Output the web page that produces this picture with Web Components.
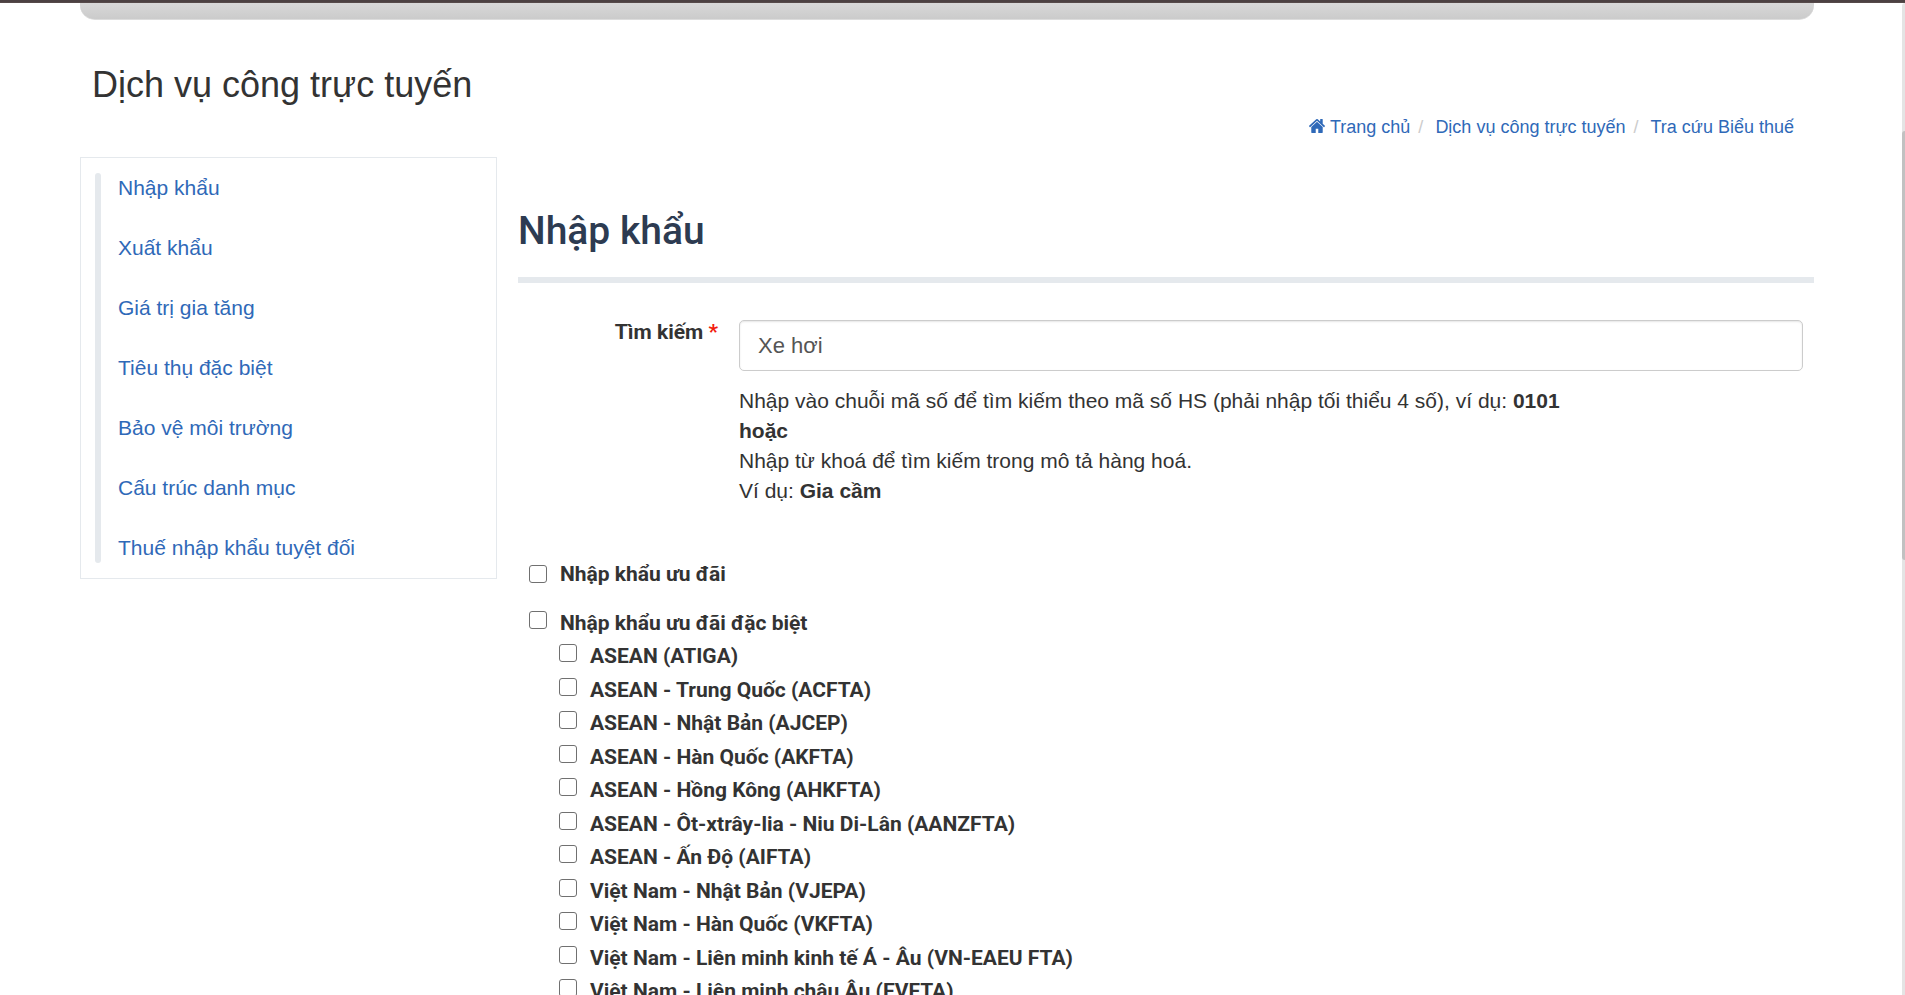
<!DOCTYPE html>
<html lang="vi">
<head>
<meta charset="utf-8">
<meta name="viewport" content="width=device-width, initial-scale=1">
<title>Tra cứu Biểu thuế</title>
<style>
  html, body { margin: 0; height: 100%; }
  body {
    overflow: hidden;
    background: #fff;
    color: #333;
    font: 21px/30px "Liberation Sans", Arial, sans-serif;
    --link: #2f69b8;
    --rule: #e5e9ed;
    --label-font: Roboto, sans-serif;
  }
</style>
</head>
<body>
<tariff-page>
  <page-header slot="header" heading="Dịch vụ công trực tuyến"></page-header>
  <side-menu slot="side">
    <menu-link href="#nhap-khau">Nhập khẩu</menu-link>
    <menu-link href="#xuat-khau">Xuất khẩu</menu-link>
    <menu-link href="#gtgt">Giá trị gia tăng</menu-link>
    <menu-link href="#ttdb">Tiêu thụ đặc biệt</menu-link>
    <menu-link href="#bvmt">Bảo vệ môi trường</menu-link>
    <menu-link href="#danh-muc">Cấu trúc danh mục</menu-link>
    <menu-link href="#tuyet-doi">Thuế nhập khẩu tuyệt đối</menu-link>
  </side-menu>
  <search-form heading="Nhập khẩu">
    <check-option class="first">Nhập khẩu ưu đãi</check-option>
    <check-option>Nhập khẩu ưu đãi đặc biệt</check-option>
    <check-group>
      <check-option>ASEAN (ATIGA)</check-option>
      <check-option>ASEAN - Trung Quốc (ACFTA)</check-option>
      <check-option>ASEAN - Nhật Bản (AJCEP)</check-option>
      <check-option>ASEAN - Hàn Quốc (AKFTA)</check-option>
      <check-option>ASEAN - Hồng Kông (AHKFTA)</check-option>
      <check-option>ASEAN - Ôt-xtrây-lia - Niu Di-Lân (AANZFTA)</check-option>
      <check-option>ASEAN - Ấn Độ (AIFTA)</check-option>
      <check-option>Việt Nam - Nhật Bản (VJEPA)</check-option>
      <check-option>Việt Nam - Hàn Quốc (VKFTA)</check-option>
      <check-option>Việt Nam - Liên minh kinh tế Á - Âu (VN-EAEU FTA)</check-option>
      <check-option>Việt Nam - Liên minh châu Âu (EVFTA)</check-option>
    </check-group>
  </search-form>
</tariff-page>

<script>
  function define(name, html, setup) {
    const template = document.createElement('template');
    template.innerHTML = html;
    customElements.define(name, class extends HTMLElement {
      constructor() {
        super();
        this.attachShadow({ mode: 'open' }).append(template.content.cloneNode(true));
      }
      connectedCallback() {
        if (setup) setup(this, this.shadowRoot);
      }
    });
  }

  define('tariff-page', `
    <style>
      :host { display: block; position: relative; height: 100%; overflow: hidden; }
      .topline { height: 2px; background: #4c4142; border-bottom: 1px solid #564a4a; }
      .container { padding: 0 91px 0 80px; }
      .banner {
        height: 16px; border-bottom: 1px solid #dcdcdc; border-radius: 0 0 15px 15px;
        background: linear-gradient(#d8d8d8, #cbcbcb);
      }
      .columns { display: grid; grid-template-columns: 417px minmax(0, 1fr); gap: 21px; align-items: start; }
      .track { position: absolute; top: 3px; right: 0; bottom: 0; width: 3px; background: #e4e4e4; border-radius: 3px 0 0 0; }
      .thumb { margin-top: 128px; height: 429px; background: #c1c1c1; border-radius: 3px 0 0 3px; }
    </style>
    <div class="topline"></div>
    <div class="container">
      <div class="banner"></div>
      <slot name="header"></slot>
      <div class="columns"><slot name="side"></slot><slot></slot></div>
    </div>
    <div class="track" aria-hidden="true"><div class="thumb"></div></div>
  `);

  define('page-header', `
    <style>
      :host { display: block; padding: 43px 20px 20px 12px; }
      h1 { margin: 0 0 10px; font-size: 36px; line-height: 44px; font-weight: 400; }
      nav { font-size: 18px; line-height: 20px; }
      ol { display: flex; justify-content: flex-end; margin: 0; padding: 0; list-style: none; }
      li + li::before { content: "/"; color: #ccc; margin: 0 12px 0 8px; }
      a { color: var(--link); text-decoration: none; }
      svg { width: 16px; height: 14px; fill: currentColor; margin-right: 5px; vertical-align: 0; }
    </style>
    <header>
      <h1></h1>
      <nav aria-label="Breadcrumb">
        <ol>
          <li><a href="#home"><svg viewBox="0 0 1612 1283" preserveAspectRatio="none" aria-hidden="true"><path d="M1382 739v480q0 26-19 45t-45 19H934V899H678v384H294q-26 0-45-19t-19-45V739q0-1 .5-3t.5-3l575-474 575 474q1 2 1 6zm223-69l-62 74q-8 9-21 11h-3q-13 0-21-7L806 171 114 748q-12 8-24 7-13-2-21-11L7 670q-8-10-7-23.500t11-21.500L730 26q32-26 76-26t76 26l244 204V35q0-14 9-23t23-9h192q14 0 23 9t9 23v408l219 182q10 8 11 21.500t-7 23.500z"/></svg>Trang chủ</a></li>
          <li><a href="#services">Dịch vụ công trực tuyến</a></li>
          <li><a href="#tariff">Tra cứu Biểu thuế</a></li>
        </ol>
      </nav>
    </header>
  `, (host, root) => {
    root.querySelector('h1').textContent = host.getAttribute('heading');
  });

  define('side-menu', `
    <style>
      :host { display: block; border: 1px solid var(--rule); padding: 15px 14px; }
      nav {
        position: relative; display: flex; flex-direction: column; gap: 30px; padding-left: 23px;
      }
      nav::before {
        content: ""; position: absolute; left: 0; top: 0; bottom: 0;
        width: 6px; border-radius: 3px; background: var(--rule);
      }
    </style>
    <nav aria-label="Biểu thuế"><slot></slot></nav>
  `);

  define('menu-link', `
    <style>
      :host { display: block; }
      a { color: var(--link); text-decoration: none; }
    </style>
    <a><slot></slot></a>
  `, (host, root) => {
    root.querySelector('a').setAttribute('href', host.getAttribute('href'));
  });

  define('search-form', `
    <style>
      :host { display: block; padding-top: 50px; }
      h2 {
        margin: 0; padding-bottom: 22px; border-bottom: 6px solid var(--rule);
        color: #2d3b51; font: 500 39px/48px var(--label-font);
      }
      form { padding: 34px 11px 0 0; }
      .row { display: grid; grid-template-columns: 200px minmax(0, 1fr); gap: 21px; }
      label { text-align: right; font-family: var(--label-font); font-weight: 700; }
      .required { color: #f21c0d; }
      .field { padding-top: 3px; }
      input {
        display: block; box-sizing: border-box; width: 100%; height: 51px; margin: 0; padding: 0 18px;
        border: 1px solid #ccc; border-radius: 5px; background: #fff;
        box-shadow: inset 0 1px 2px rgba(0, 0, 0, .1);
        color: #555; font: 22px/30px "Liberation Sans", Arial, sans-serif;
      }
      .help { margin: 15px 0 0; }
      .options { padding: 53px 0 0 11px; }
    </style>
    <h2></h2>
    <form>
      <div class="row">
        <label for="keyword">Tìm kiếm <span class="required">*</span></label>
        <div class="field">
          <input id="keyword" type="text" value="Xe hơi" aria-describedby="help">
          <p class="help" id="help">Nhập vào chuỗi mã số để tìm kiếm theo mã số HS (phải nhập tối thiểu 4 số), ví dụ: <b>0101</b><br><b>hoặc</b><br>Nhập từ khoá để tìm kiếm trong mô tả hàng hoá.<br>Ví dụ: <b>Gia cầm</b></p>
        </div>
      </div>
      <div class="options"><slot></slot></div>
    </form>
  `, (host, root) => {
    root.querySelector('h2').textContent = host.getAttribute('heading');
  });

  define('check-group', `
    <style>
      :host { display: block; padding-left: 30px; }
      ::slotted(:nth-child(odd)) { padding-bottom: 4px; }
    </style>
    <slot></slot>
  `);

  define('check-option', `
    <style>
      :host { display: block; padding-bottom: 3px; font-family: var(--label-font); font-weight: 700; }
      :host(.first) { padding-bottom: 19px; }
      label { display: flex; align-items: flex-start; gap: 13px; }
      input {
        appearance: none; box-sizing: border-box; flex: none; width: 18px; height: 18px; margin: 3px 0 0;
        border: 1px solid #707070; border-radius: 3px; background: #fff;
      }
      :host(.first) input { margin-top: 6px; }
      input:checked { background: var(--link); border-color: var(--link); }
    </style>
    <label><input type="checkbox"><span><slot></slot></span></label>
  `);
</script>
</body>
</html>
